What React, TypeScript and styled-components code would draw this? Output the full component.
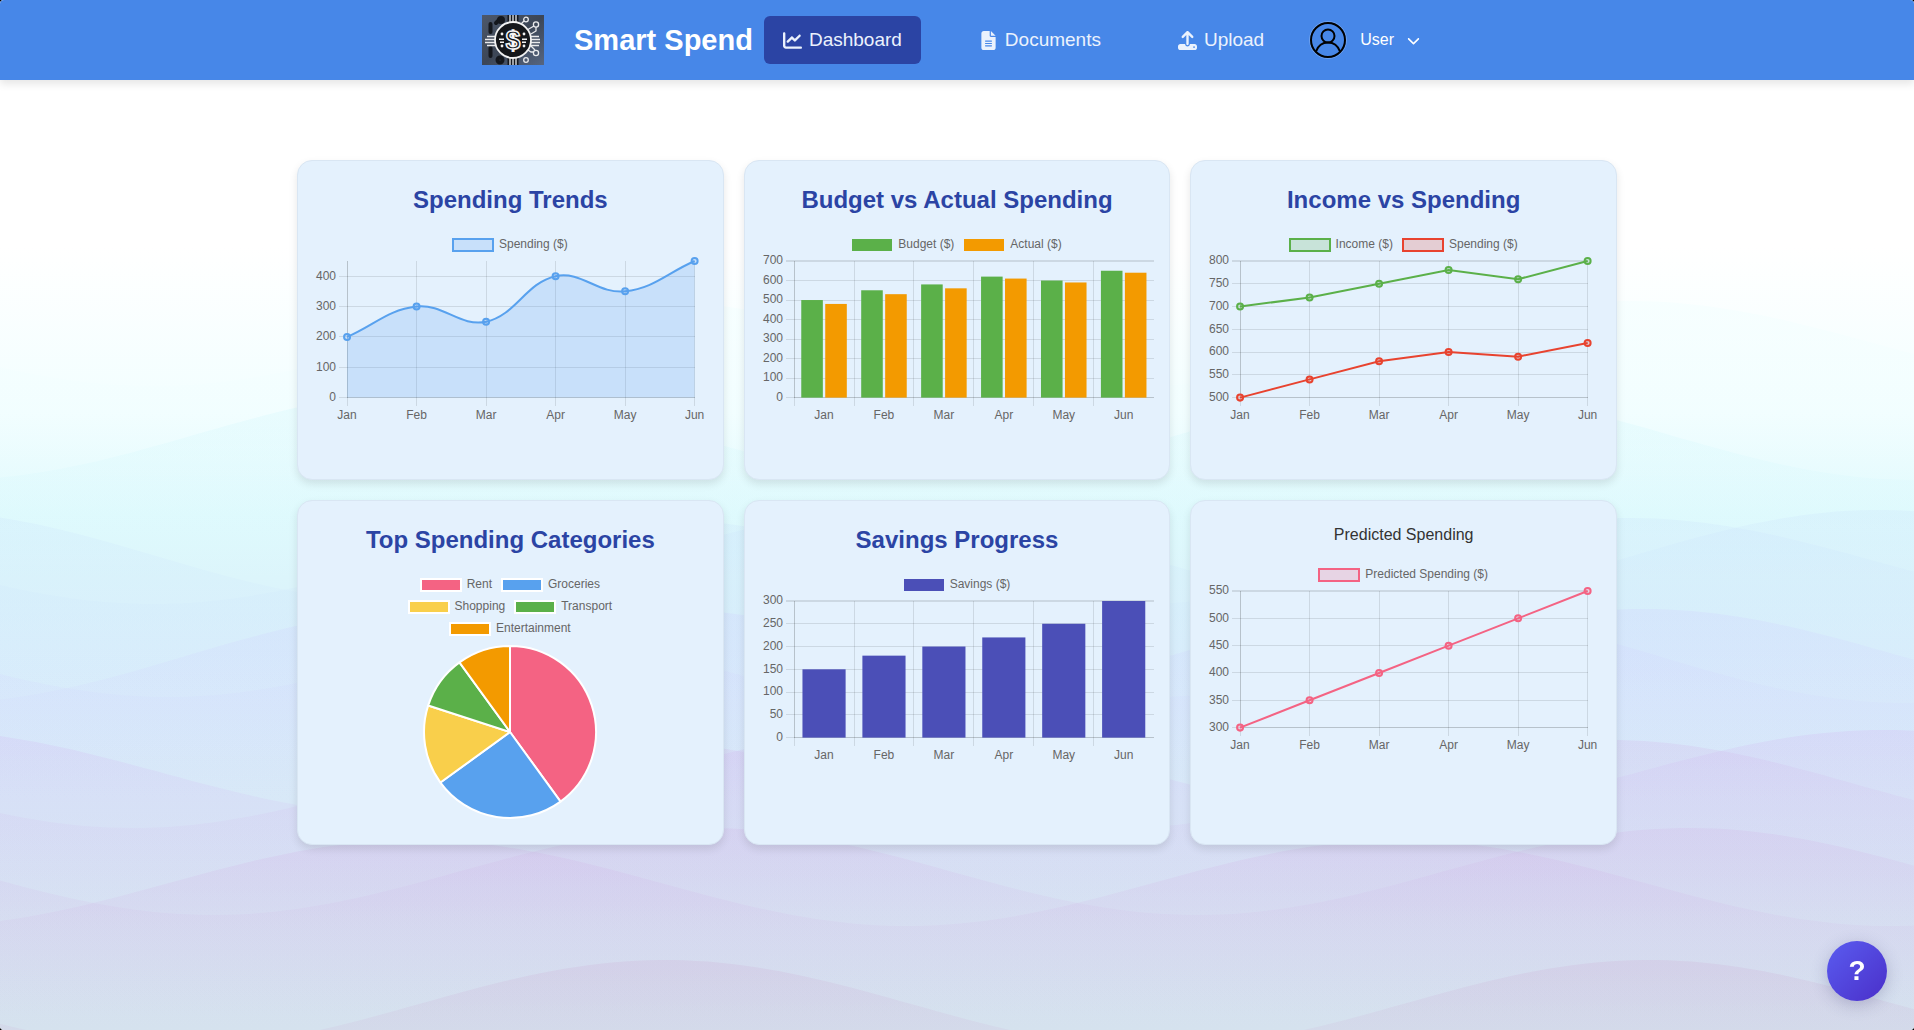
import React from "react";
import styled, { createGlobalStyle } from "styled-components";
import { FaChartLine, FaChevronDown, FaFileLines, FaUpload } from "react-icons/fa6";

const GlobalStyle = createGlobalStyle`
  *, *::before, *::after { box-sizing: border-box; }
  html { background: #000; }
  body {
    margin: 0;
    font-family: "Liberation Sans", Arial, sans-serif;
    font-size: 16px;
    color: #333;
  }
`;

const Shell = styled.div`
  position: relative;
  display: flex;
  flex-direction: column;
  min-height: 100vh;
  overflow: hidden;
  border-radius: 4px;
  background: #fff;
`;

const Backdrop = styled.svg`
  position: absolute;
  inset: 0;
  width: 100%;
  height: 100%;
`;

const Header = styled.header`
  position: relative;
  display: flex;
  align-items: center;
  justify-content: center;
  height: 80px;
  background: #4787e8;
  box-shadow: 0 4px 8px rgba(0, 0, 0, 0.1);
`;

const Brand = styled.a`
  display: flex;
  align-items: center;
  gap: 30px;
  margin-right: 11px;
  color: #fff;
  font-size: 29px;
  font-weight: 700;
  text-decoration: none;
`;

const Nav = styled.nav`
  display: flex;
  gap: 39px;
  margin-right: 14px;
`;

const NavLink = styled.a<{ $active?: boolean }>`
  display: flex;
  align-items: center;
  gap: 7px;
  height: 48px;
  padding: 0 19px;
  border-radius: 6px;
  background: ${(p) => (p.$active ? "#2b44a4" : "transparent")};
  color: #ebf2fd;
  font-size: 19px;
  text-decoration: none;
`;

const UserButton = styled.button`
  display: flex;
  align-items: center;
  gap: 13px;
  padding: 8px 12px;
  border: 0;
  background: none;
  color: #fff;
  font: inherit;
  cursor: pointer;
`;

const Chevron = styled(FaChevronDown)`
  width: 13px;
  height: 13px;
`;

const Avatar = styled.span`
  display: flex;
  width: 38px;
  height: 38px;
  border: 1px solid #6ea1ee;
  border-radius: 50%;
`;

const Main = styled.main`
  position: relative;
  width: 100%;
  max-width: 1320px;
  margin: 0 auto;
  padding: 80px 0;
`;

const Grid = styled.div`
  display: grid;
  grid-template-columns: repeat(3, minmax(0, 1fr));
  grid-template-rows: minmax(320px, auto) minmax(345px, auto);
  gap: 20px;
`;

const Card = styled.section`
  padding: 16px;
  border: 1px solid #d9e6f3;
  border-radius: 15px;
  background: #e4f1fd;
  box-shadow: 0 4px 8px rgba(0, 0, 0, 0.1);
`;

const CardTitle = styled.h2`
  margin: 0 0 6px;
  color: #2b44a4;
  font-size: 24px;
  font-weight: 700;
  line-height: 46px;
  text-align: center;
`;

const PlainTitle = styled.p`
  margin: 0 0 6px;
  color: #333;
  font-size: 16px;
  line-height: 36px;
  text-align: center;
`;

const LegendList = styled.ul<{ $narrow?: boolean }>`
  display: flex;
  flex-wrap: wrap;
  justify-content: center;
  gap: 10px;
  max-width: ${(p) => (p.$narrow ? "250px" : "none")};
  margin: 0 auto;
  padding: 10px 0;
  list-style: none;
`;

const LegendItem = styled.li`
  display: flex;
  align-items: flex-start;
  gap: 6px;
  height: 12px;
  color: #666;
  font-size: 12px;
  line-height: 10px;
`;

const Swatch = styled.span<{ $fill: string; $edge?: string }>`
  width: 40px;
  height: 12px;
  background: ${(p) => p.$fill};
  box-shadow: ${(p) => (p.$edge ? `0 0 0 1px ${p.$edge}, inset 0 0 0 1px ${p.$edge}` : "none")};
`;

const Plot = styled.svg`
  display: block;
  width: 100%;
  height: auto;
  overflow: visible;

  text {
    fill: #666;
    font-size: 12px;
  }
`;

const PieDrawing = styled.svg`
  display: block;
  width: 174px;
  height: 174px;
  margin: 0 auto;
  overflow: visible;
`;

const HelpButton = styled.button`
  position: fixed;
  right: 27px;
  bottom: 29px;
  width: 60px;
  height: 60px;
  border: 0;
  border-radius: 50%;
  background: linear-gradient(135deg, #5a5cf0, #4a2fc9);
  box-shadow: 0 4px 16px rgba(60, 60, 110, 0.25);
  color: #fff;
  font-family: inherit;
  font-size: 28px;
  font-weight: 700;
  cursor: pointer;
`;

/* ---------- background waves ---------- */

type Wave = { peak: number; top: number; bottom: number; color: string; alpha: number };

const PERIOD = 984;
const WAVES: Wave[] = [
  { peak: 645, top: 301, bottom: 386, color: "#f0feff", alpha: 0.4 },
  { peak: 440, top: 390, bottom: 480, color: "#d2f7fc", alpha: 0.34 },
  { peak: 645, top: 518, bottom: 604, color: "#cde4fb", alpha: 0.28 },
  { peak: -90, top: 510, bottom: 602, color: "#cde4fb", alpha: 0.28 },
  { peak: 660, top: 609, bottom: 697, color: "#d2d8fd", alpha: 0.36 },
  { peak: 430, top: 610, bottom: 703, color: "#d2d8fd", alpha: 0.36 },
  { peak: 625, top: 740, bottom: 828, color: "#d2b8ea", alpha: 0.26 },
  { peak: -85, top: 730, bottom: 815, color: "#d2bcf2", alpha: 0.28 },
  { peak: 705, top: 828, bottom: 915, color: "#d2b4e6", alpha: 0.24 },
  { peak: 415, top: 840, bottom: 926, color: "#d2b4e6", alpha: 0.26 },
  { peak: 665, top: 960, bottom: 1048, color: "#cdb4d8", alpha: 0.28 },
];

function wavePath({ peak, top, bottom }: Wave) {
  const mid = (top + bottom) / 2;
  const amp = (bottom - top) / 2;
  let d = "";
  for (let x = 0; x <= 1920; x += 12) {
    const y = mid - amp * Math.cos(((x - peak) / PERIOD) * Math.PI * 2);
    d += `${x ? "L" : "M"}${x} ${y.toFixed(1)}`;
  }
  return `${d}V1040H0Z`;
}

function Waves() {
  return (
    <Backdrop viewBox="0 0 1914 1030" preserveAspectRatio="none" aria-hidden="true">
      <defs>
        <linearGradient id="sky-base" x1="0" y1="0" x2="0" y2="1">
          <stop offset="0.24" stopColor="#ffffff" />
          <stop offset="0.4" stopColor="#f2feff" />
          <stop offset="0.5" stopColor="#e0fafd" />
          <stop offset="0.56" stopColor="#dcf5fb" />
          <stop offset="0.65" stopColor="#d9edfb" />
          <stop offset="0.76" stopColor="#d8e9f8" />
          <stop offset="0.88" stopColor="#d7e4f3" />
          <stop offset="1" stopColor="#d5e2ee" />
        </linearGradient>
        {WAVES.map((w, i) => (
          <linearGradient
            key={i}
            id={`wave-${i}`}
            gradientUnits="userSpaceOnUse"
            x1="0"
            x2="0"
            y1={w.top}
            y2={w.top + 190}
          >
            <stop offset="0" stopColor={w.color} stopOpacity={w.alpha} />
            <stop offset="1" stopColor={w.color} stopOpacity="0" />
          </linearGradient>
        ))}
      </defs>
      <rect width="1914" height="1030" fill="url(#sky-base)" />
      {WAVES.map((w, i) => (
        <path key={i} d={wavePath(w)} fill={`url(#wave-${i})`} />
      ))}
    </Backdrop>
  );
}

/* ---------- charts ---------- */

const MONTHS = ["Jan", "Feb", "Mar", "Apr", "May", "Jun"];
const TOP = 0;
const BOTTOM = 136.4;
const LEFT = 33;

type Series = { label: string; color: string; fill: string; values: number[] };

type Scale = { min: number; max: number; ticks: number[] };

const range = (from: number, to: number, step: number) =>
  Array.from({ length: Math.round((to - from) / step) + 1 }, (_, i) => from + i * step);

const toY = (v: number, s: Scale) => BOTTOM - ((v - s.min) / (s.max - s.min)) * (BOTTOM - TOP);

function Axes({ scale, right, lines, labels }: { scale: Scale; right: number; lines: number[]; labels: number[] }) {
  return (
    <>
      <g stroke="#000" strokeOpacity="0.1" shapeRendering="crispEdges">
        {scale.ticks.map((t) => (
          <line key={t} x1={LEFT - 8} x2={right} y1={toY(t, scale)} y2={toY(t, scale)} />
        ))}
        {lines.map((x) => (
          <line key={x} x1={x} x2={x} y1={TOP} y2={BOTTOM + 8} />
        ))}
        <line x1={LEFT} x2={LEFT} y1={TOP} y2={BOTTOM} />
        <line x1={LEFT} x2={right} y1={BOTTOM} y2={BOTTOM} />
      </g>
      {scale.ticks.map((t) => (
        <text key={t} x={LEFT - 11} y={Math.ceil(toY(t, scale)) + 3} textAnchor="end">
          {t}
        </text>
      ))}
      {MONTHS.map((m, i) => (
        <text key={m} x={labels[i]} y={158} textAnchor="middle">
          {m}
        </text>
      ))}
    </>
  );
}

function curve(points: [number, number][], tension: number) {
  const dist = (a: [number, number], b: [number, number]) => Math.hypot(b[0] - a[0], b[1] - a[1]);
  const clamp = (y: number) => Math.min(BOTTOM, Math.max(TOP, y));
  const handles = points.map((p, i) => {
    const prev = points[i - 1] ?? p;
    const next = points[i + 1] ?? p;
    const d1 = dist(prev, p);
    const d2 = dist(p, next);
    const fa = (tension * d1) / (d1 + d2);
    const fb = (tension * d2) / (d1 + d2);
    const dx = next[0] - prev[0];
    const dy = next[1] - prev[1];
    return {
      before: [p[0] - fa * dx, clamp(p[1] - fa * dy)],
      after: [p[0] + fb * dx, clamp(p[1] + fb * dy)],
    };
  });
  return points
    .map((p, i) =>
      i === 0 ? `M${p[0]} ${p[1]}` : `C${handles[i - 1].after.join(" ")} ${handles[i].before.join(" ")} ${p.join(" ")}`
    )
    .join("");
}

type ChartProps = { name: string; series: Series[]; scale: Scale };

function LineChart({ name, series, scale, tension = 0, area }: ChartProps & { tension?: number; area?: boolean }) {
  const right = 380;
  const xs = MONTHS.map((_, i) => LEFT + ((right - LEFT) / 5) * i);
  return (
    <>
      <Legend items={series.map((s) => ({ label: s.label, fill: s.fill, edge: s.color }))} />
      <Plot viewBox="0 0 392 164" role="img" aria-label={name}>
        <Axes scale={scale} right={right} lines={xs} labels={xs} />
        {series.map((s) => {
          const points = s.values.map((v, i) => [xs[i], toY(v, scale)] as [number, number]);
          const d = curve(points, tension);
          return (
            <g key={s.label}>
              {area && <path d={`${d}V${BOTTOM}H${LEFT}Z`} fill={s.fill} />}
              <path d={d} fill="none" stroke={s.color} strokeWidth="2" />
              {points.map(([x, y]) => (
                <circle key={x} cx={x} cy={y} r="3" fill={s.fill} stroke={s.color} strokeWidth="2" />
              ))}
            </g>
          );
        })}
      </Plot>
    </>
  );
}

function BarChart({ name, series, scale }: ChartProps) {
  const right = 392;
  const step = (right - LEFT) / 6;
  const slot = (step * 0.8) / series.length;
  const starts = MONTHS.map((_, i) => LEFT + step * i);
  return (
    <>
      <Legend items={series.map((s) => ({ label: s.label, fill: s.fill }))} />
      <Plot viewBox="0 0 392 164" role="img" aria-label={name}>
        <Axes scale={scale} right={right} lines={starts} labels={starts.map((x) => x + step / 2)} />
        {series.map((s, k) =>
          s.values.map((v, i) => (
            <rect
              key={`${k}-${i}`}
              x={starts[i] + step * 0.1 + slot * k + slot * 0.05}
              y={toY(v, scale)}
              width={slot * 0.9}
              height={BOTTOM - toY(v, scale)}
              fill={s.fill}
            />
          ))
        )}
      </Plot>
    </>
  );
}

function Legend({ items, narrow }: { items: { label: string; fill: string; edge?: string }[]; narrow?: boolean }) {
  return (
    <LegendList $narrow={narrow}>
      {items.map((it) => (
        <LegendItem key={it.label}>
          <Swatch $fill={it.fill} $edge={it.edge} />
          {it.label}
        </LegendItem>
      ))}
    </LegendList>
  );
}

const CATEGORIES = [
  { label: "Rent", fill: "#f46383", share: 40 },
  { label: "Groceries", fill: "#58a1ee", share: 25 },
  { label: "Shopping", fill: "#f9cf4b", share: 15 },
  { label: "Transport", fill: "#5bb049", share: 10 },
  { label: "Entertainment", fill: "#f39a00", share: 10 },
];

function PieChart() {
  const c = 87;
  const r = 86;
  let sum = 0;
  const at = (share: number) => {
    const a = (share / 100) * Math.PI * 2 - Math.PI / 2;
    return `${c + r * Math.cos(a)} ${c + r * Math.sin(a)}`;
  };
  return (
    <>
      <Legend narrow items={CATEGORIES.map((s) => ({ label: s.label, fill: s.fill, edge: "#fff" }))} />
      <PieDrawing viewBox="0 0 174 174" role="img" aria-label="Top Spending Categories">
        {CATEGORIES.map((s) => {
          const from = sum;
          sum += s.share;
          return (
            <path
              key={s.label}
              d={`M${c} ${c}L${at(from)}A${r} ${r} 0 0 1 ${at(sum)}Z`}
              fill={s.fill}
              stroke="#fff"
              strokeWidth="2"
              strokeLinejoin="bevel"
            />
          );
        })}
      </PieDrawing>
    </>
  );
}

/* ---------- drawings ---------- */

function Logo() {
  return (
    <svg width="62" height="50" viewBox="0 0 62 50" role="img" aria-label="Smart Spend logo">
      <defs>
        <linearGradient id="plate" x1="0" y1="0" x2="1" y2="1">
          <stop offset="0" stopColor="#4d586b" />
          <stop offset="0.5" stopColor="#3c4656" />
          <stop offset="1" stopColor="#56657f" />
        </linearGradient>
      </defs>
      <rect width="62" height="50" fill="url(#plate)" />
      <g fill="none" stroke="#14171d" strokeWidth="4" strokeLinecap="round">
        <path d="M8.500 9v8M8.500 33v8M14 8l3-3" />
        <circle cx="19" cy="5" r="2" />
        <circle cx="18" cy="45" r="2.500" />
      </g>
      <g stroke="#14171d" strokeWidth="11">
        <path d="M31 0v50" />
      </g>
      <g stroke="#e9eaec" strokeWidth="1.300" fill="none">
        <path d="M28 0v8M31 0v8M34 0v8M28 42v8M31 42v8M34 42v8" />
        <path d="M5 21.500h9M3 24.500h10M3 27.500h10M5 30.500h9" />
        <path d="M48 21.500h9M49 24.500h9M49 27.500h9M48 30.500h9" />
        <path d="M39 9l3-3M45 15l7-4M49 19l5-3v-4M46 35l3 2h3M49 31l4 4" />
        <circle cx="44" cy="4.500" r="2.300" />
        <circle cx="54" cy="9.500" r="2.600" />
        <circle cx="54" cy="38" r="2.600" />
        <circle cx="44" cy="45" r="2.300" />
      </g>
      <circle cx="31" cy="25" r="18" fill="#15171b" stroke="#f2f2f2" strokeWidth="1.800" />
      <g fill="#f2f2f2">
        <circle cx="20" cy="19" r="1.400" />
        <circle cx="20" cy="31" r="1.400" />
        <circle cx="42" cy="19" r="1.400" />
        <circle cx="42" cy="31" r="1.400" />
        <path d="M17 23.500h5v1.500h-5zM18 26.500h4v1.500h-4zM40 23.500h5v1.500h-5zM40 26.500h4v1.500h-4z" />
      </g>
      <text
        x="31"
        y="34"
        textAnchor="middle"
        fontFamily="Liberation Sans, sans-serif"
        fontSize="26"
        fontWeight="700"
        fill="#15171b"
        stroke="#f5f5f5"
        strokeWidth="1.500"
      >
        $
      </text>
    </svg>
  );
}

function UserGlyph() {
  return (
    <svg width="36" height="36" viewBox="0 0 36 36" fill="none" stroke="#000" strokeWidth="2" aria-hidden="true">
      <circle cx="18" cy="18" r="17" />
      <circle cx="18" cy="14" r="6.500" />
      <path d="M6 29.500C8 24 12.500 20.500 18 20.500S28 24 30 29.500" />
    </svg>
  );
}

/* ---------- page ---------- */

export default function App() {
  return (
    <>
      <GlobalStyle />
      <Shell>
        <Waves />
        <Header>
          <Brand href="#">
            <Logo />
            Smart Spend
          </Brand>
          <Nav>
            <NavLink href="#dashboard" $active aria-current="page">
              <FaChartLine />
              Dashboard
            </NavLink>
            <NavLink href="#documents">
              <FaFileLines />
              Documents
            </NavLink>
            <NavLink href="#upload">
              <FaUpload />
              Upload
            </NavLink>
          </Nav>
          <UserButton type="button" aria-haspopup="menu">
            <Avatar>
              <UserGlyph />
            </Avatar>
            User
            <Chevron />
          </UserButton>
        </Header>

        <Main>
          <Grid>
            <Card>
              <CardTitle>Spending Trends</CardTitle>
              <LineChart
                name="Spending Trends"
                tension={0.4}
                area
                scale={{ min: 0, max: 450, ticks: range(0, 400, 100) }}
                series={[
                  {
                    label: "Spending ($)",
                    color: "#58a1ee",
                    fill: "rgba(88, 161, 238, 0.2)",
                    values: [200, 300, 250, 400, 350, 450],
                  },
                ]}
              />
            </Card>
            <Card>
              <CardTitle>Budget vs Actual Spending</CardTitle>
              <BarChart
                name="Budget vs Actual Spending"
                scale={{ min: 0, max: 700, ticks: range(0, 700, 100) }}
                series={[
                  { label: "Budget ($)", color: "#5bb049", fill: "#5bb049", values: [500, 550, 580, 620, 600, 650] },
                  { label: "Actual ($)", color: "#f39a00", fill: "#f39a00", values: [480, 530, 560, 610, 590, 640] },
                ]}
              />
            </Card>
            <Card>
              <CardTitle>Income vs Spending</CardTitle>
              <LineChart
                name="Income vs Spending"
                scale={{ min: 500, max: 800, ticks: range(500, 800, 50) }}
                series={[
                  {
                    label: "Income ($)",
                    color: "#5bb049",
                    fill: "rgba(91, 176, 73, 0.2)",
                    values: [700, 720, 750, 780, 760, 800],
                  },
                  {
                    label: "Spending ($)",
                    color: "#e8432f",
                    fill: "rgba(232, 67, 47, 0.2)",
                    values: [500, 540, 580, 600, 590, 620],
                  },
                ]}
              />
            </Card>
            <Card>
              <CardTitle>Top Spending Categories</CardTitle>
              <PieChart />
            </Card>
            <Card>
              <CardTitle>Savings Progress</CardTitle>
              <BarChart
                name="Savings Progress"
                scale={{ min: 0, max: 300, ticks: range(0, 300, 50) }}
                series={[
                  { label: "Savings ($)", color: "#4b4fb7", fill: "#4b4fb7", values: [150, 180, 200, 220, 250, 300] },
                ]}
              />
            </Card>
            <Card>
              <PlainTitle>Predicted Spending</PlainTitle>
              <LineChart
                name="Predicted Spending"
                scale={{ min: 300, max: 550, ticks: range(300, 550, 50) }}
                series={[
                  {
                    label: "Predicted Spending ($)",
                    color: "#f46383",
                    fill: "rgba(244, 99, 131, 0.2)",
                    values: [300, 350, 400, 450, 500, 550],
                  },
                ]}
              />
            </Card>
          </Grid>
        </Main>

        <HelpButton type="button" aria-label="Help">
          ?
        </HelpButton>
      </Shell>
    </>
  );
}
